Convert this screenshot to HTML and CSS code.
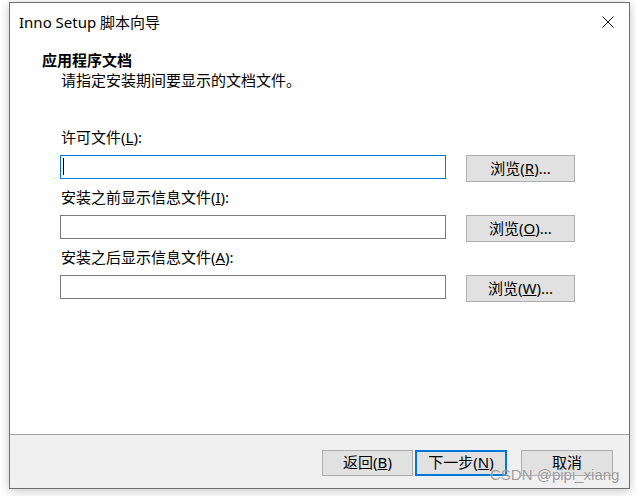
FILE: index.html
```html
<!DOCTYPE html>
<html>
 <head>
  <meta charset="UTF-8">
  <title>Inno Setup 脚本向导</title>
  <link rel="stylesheet" href="styles.css">
 </head>
 <body>
  <div id="wrap">
   <div class="titlebar">
    <span class="title">Inno Setup 脚本向导</span>
    <svg class="close" width="12" height="12" viewBox="0 0 12 12">
     <path d="M0.5 0.5 L11.5 11.5 M11.5 0.5 L0.5 11.5" stroke="#111" stroke-width="1" fill="none" />
    </svg>
   </div>
   <div class="main">
    <div class="head">应用程序文档</div>
    <div class="sub">请指定安装期间要显示的文档文件。</div>

    <div class="fields">
     <div class="label">许可文件(<u>L</u>):</div>
     <div class="row">
      <div class="edit focus"><span class="caret"></span></div>
      <div class="btn">浏览(<u>R</u>)...</div>
     </div>

     <div class="label">安装之前显示信息文件(<u>I</u>):</div>
     <div class="row">
      <div class="edit"></div>
      <div class="btn">浏览(<u>O</u>)...</div>
     </div>

     <div class="label">安装之后显示信息文件(<u>A</u>):</div>
     <div class="row">
      <div class="edit"></div>
      <div class="btn">浏览(<u>W</u>)...</div>
     </div>
    </div>
   </div>
   <div class="foot">
    <div class="btn small">返回(<u>B</u>)</div>
    <div class="btn small default">下一步(<u>N</u>)</div>
    <div class="btn small cancel">取消</div>
   </div>
  </div>
  <div class="mark">CSDN @pipi_xiang</div>
 </body>
</html>
```

FILE: styles.css
```css
*{ margin:0; padding:0; box-sizing:border-box;}

body{
 background:#fff;
 font-family:"Noto Sans","Noto Sans CJK SC",sans-serif;
 font-size:15px;
 color:#000;
 width:636px;
 height:496px;
 overflow:hidden;
 position:relative;
}

#wrap{
 width:621px;
 height:487px;
 margin:2px 0 0 9px;
 border:1px solid #6e6e6e;
 box-shadow:0 2px 10px rgba(0,0,0,.22);
 background:#fff;
 display:flex;
 flex-direction:column;
}

.titlebar{
 height:37px;
 padding:0 15px 0 9px;
 display:flex;
 align-items:center;
 justify-content:space-between;
}
.title{ line-height:20px; padding-top:1px;}
.close{ display:block;}

.main{
 flex:1;
 padding:10px 0 0 0;
}

.head{
 font-family:"Noto Sans CJK SC",sans-serif;
 font-weight:bold;
 line-height:20px;
 padding-left:32px;
}
.sub{
 font-family:"Noto Sans CJK SC",sans-serif;
 line-height:20px;
 padding-left:51px;
}

.fields{
 padding:37px 0 0 50px;
}

.label{
 line-height:20px;
 padding-left:1px;
 margin-bottom:8px;
}

.row{
 display:flex;
 align-items:flex-start;
 gap:20px;
 height:27px;
 margin-bottom:5px;
}

.edit{
 width:386px;
 height:24px;
 border:1px solid #7a7a7a;
 background:#fff;
 padding:2px 0 0 2px;
}
.edit.focus{ border-color:#0078d7;}
.caret{
 display:block;
 width:1px;
 height:17px;
 background:#000;
}

.btn{
 width:109px;
 height:27px;
 background:#e1e1e1;
 border:1px solid #adadad;
 text-align:center;
 line-height:24px;
}

.foot{
 height:54px;
 background:#f0f0f0;
 border-top:1px solid #a0a0a0;
 display:flex;
 justify-content:flex-end;
 align-items:flex-start;
 padding:15px 16px 0 0;
}
.btn.small{
 width:91px;
 height:26px;
 line-height:23px;
}
.btn.default{
 width:92px;
 border:2px solid #0078d7;
 line-height:21px;
 margin-left:2px;
}
.btn.cancel{ width:92px; margin-left:14px;}

.mark{
 position:absolute;
 left:490px;
 top:466px;
 font-family:"Liberation Sans",sans-serif;
 font-size:15px;
 color:rgba(120,120,120,.75);
 text-shadow:0 0 1px rgba(255,255,255,.9);
}
```
